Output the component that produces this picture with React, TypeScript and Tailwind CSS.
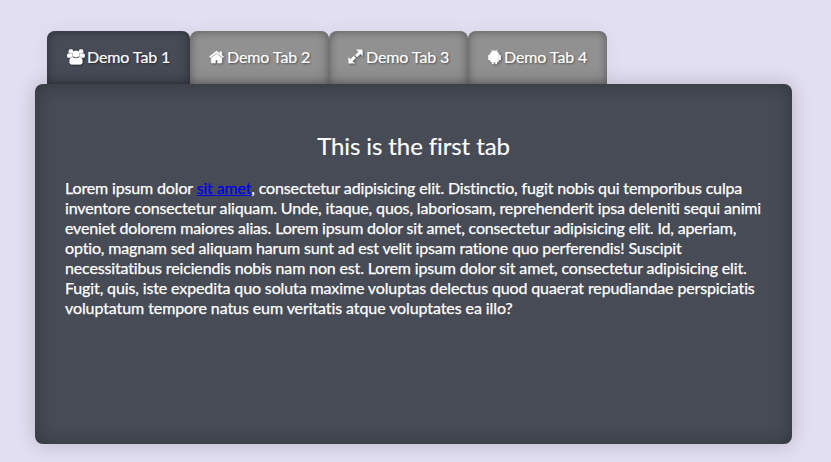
import type { ReactNode } from "react";

const UsersIcon = () => (
  <svg viewBox="0 0 18 16" className="h-4 w-[18px]" fill="currentColor" stroke="currentColor" strokeWidth="0.3">
    <circle cx="3.9" cy="2.500" r="2.300" />
    <circle cx="14.1" cy="2.500" r="2.300" />
    <circle cx="9" cy="5" r="3.300" />
    <path d="M1.400 4.500C.3 4.500 0 6 0 7.300c0 .9.7 1.400 1.600 1.400h1.800c.7-.9 1.600-1.400 2.600-1.500-.7-.8-.8-1.600-.7-2.400-1.600.6-2.600.2-3.900-.3zM16.600 4.500c1.100 0 1.400 1.500 1.400 2.800 0 .9-.7 1.400-1.600 1.400h-1.800c-.7-.9-1.600-1.400-2.600-1.500.7-.8.8-1.600.7-2.400 1.600.6 2.600.2 3.900-.3zM5.400 7.900c-2 0-2.900 2.300-2.900 5.200 0 1.600 1 2.500 2.500 2.500h8c1.500 0 2.500-.9 2.500-2.500 0-2.900-.9-5.200-2.900-5.200-2.200 1.800-5 1.800-7.200 0z" />
  </svg>
);

const HomeIcon = () => (
  <svg viewBox="0 0 16 14" className="h-[14px] w-[15px]" fill="currentColor" stroke="currentColor" strokeWidth="0.5">
    <path d="M8 3.200 2.300 8v4.800c0 .4.300.7.700.7h3.900V10.200h2.200v3.300H13c.4 0 .7-.3.700-.7V8z" />
    <path d="m15.700 6.700-2-1.700V1.400h-2.200v1.800L8.800 1a1.300 1.300 0 0 0-1.600 0L.3 6.700l.9 1L8 2.400l6.800 5.300z" />
  </svg>
);

const ExpandIcon = () => (
  <svg viewBox="0 0 16 16" className="h-[15px] w-[15px]" fill="currentColor" stroke="currentColor" strokeWidth="0.4">
    <path d="M9 .8h6c.2 0 .4.200.4.400v5.900l-2.100-2-3.500 3.500-2-2L11.300 3zM7 15.200H1a.4.4 0 0 1-.4-.4V9l2.100 2 3.500-3.500 2 2L4.700 13z" />
  </svg>
);

const AndroidIcon = () => (
  <svg viewBox="0 0 14 16" className="h-4 w-[13px]" fill="currentColor" stroke="currentColor" strokeWidth="0.4">
    <path d="M2.300 5.300C2.500 3.600 3.400 2.500 4.700 1.800L4 .5l.3-.2.800 1.300a5.600 5.600 0 0 1 3.800 0L9.700.3l.3.200-.7 1.300c1.300.7 2.200 1.800 2.400 3.500zM2.400 5.200h9.200v7c0 .6-.5 1.100-1.100 1.100h-.8v1.500c0 1.300-2 1.300-2 0v-1.500H6.300v1.500c0 1.300-2 1.300-2 0v-1.500h-.8c-.6 0-1.100-.5-1.100-1.100zM.3 6.600c0-1.300 1.900-1.300 1.900 0v3.900c0 1.300-1.900 1.300-1.900 0zM11.800 6.600c0-1.300 1.900-1.300 1.900 0v3.900c0 1.300-1.900 1.300-1.900 0z" />
  </svg>
);

const tabs: { label: string; icon: ReactNode; box: string }[] = [
  { label: "Demo Tab 1", icon: <UsersIcon />, box: "w-[143px] bg-[#474b56] gap-[2px] pl-5" },
  { label: "Demo Tab 2", icon: <HomeIcon />, box: "w-[139px] bg-[#919191] gap-[3px] pl-[19px]" },
  { label: "Demo Tab 3", icon: <ExpandIcon />, box: "w-[139px] bg-[#919191] gap-[3px] pl-[19px]" },
  { label: "Demo Tab 4", icon: <AndroidIcon />, box: "w-[139px] bg-[#919191] gap-[3px] pl-5" },
];

const lines: { text: ReactNode; spacing: string }[] = [
  {
    text: <>Lorem ipsum dolor <a href="#" className="text-[#0000ee] underline">sit amet</a>, consectetur adipisicing elit. Distinctio, fugit nobis qui temporibus culpa</>,
    spacing: "tracking-[-0.147px]",
  },
  { text: "inventore consectetur aliquam. Unde, itaque, quos, laboriosam, reprehenderit ipsa deleniti sequi animi", spacing: "tracking-[-0.135px]" },
  { text: "eveniet dolorem maiores alias. Lorem ipsum dolor sit amet, consectetur adipisicing elit. Id, aperiam,", spacing: "tracking-[-0.16px]" },
  { text: "optio, magnam sed aliquam harum sunt ad est velit ipsam ratione quo perferendis! Suscipit", spacing: "tracking-[-0.153px]" },
  { text: "necessitatibus reiciendis nobis nam non est. Lorem ipsum dolor sit amet, consectetur adipisicing elit.", spacing: "tracking-[-0.15px]" },
  { text: "Fugit, quis, iste expedita quo soluta maxime voluptas delectus quod quaerat repudiandae perspiciatis", spacing: "tracking-[-0.125px]" },
  { text: "voluptatum tempore natus eum veritatis atque voluptates ea illo?", spacing: "tracking-[-0.09px]" },
];

export default function App() {
  return (
    <div className="h-[462px] overflow-hidden bg-[#e3dff2] px-[35px] pt-[31px] font-['Lato',sans-serif] text-base leading-5 text-white [font-variant-ligatures:none]">
      <nav className="flex h-[53px] pl-3">
        {tabs.map((tab) => (
          <button
            key={tab.label}
            className={`flex h-full shrink-0 items-center rounded-t-lg pb-[2px] whitespace-nowrap tracking-[-0.1px] shadow-[inset_0_0_10px_rgba(0,0,0,0.4),0_0_20px_rgba(0,0,0,0.05)] [text-shadow:1px_1px_2px_rgba(0,0,0,0.5)] [-webkit-text-stroke:0.2px_white] ${tab.box}`}
          >
            <span className="flex drop-shadow-[1px_1px_1px_rgba(0,0,0,0.4)]">{tab.icon}</span>
            <span>{tab.label}</span>
          </button>
        ))}
      </nav>
      <main className="relative h-[360px] w-[757px] rounded-lg bg-[#474b56] px-[30px] pt-[47px] shadow-[inset_0_0_20px_rgba(0,0,0,0.3),0_0_20px_rgba(0,0,0,0.2)]">
        <h1 className="text-center text-2xl leading-[30px] tracking-[-0.1px] [-webkit-text-stroke:0.15px_white]">This is the first tab</h1>
        <p className="mt-[17px] whitespace-nowrap [-webkit-text-stroke:0.25px_currentColor]">
          {lines.map((line, i) => (
            <span key={i} className={`block ${line.spacing}`}>{line.text}</span>
          ))}
        </p>
      </main>
    </div>
  );
}
